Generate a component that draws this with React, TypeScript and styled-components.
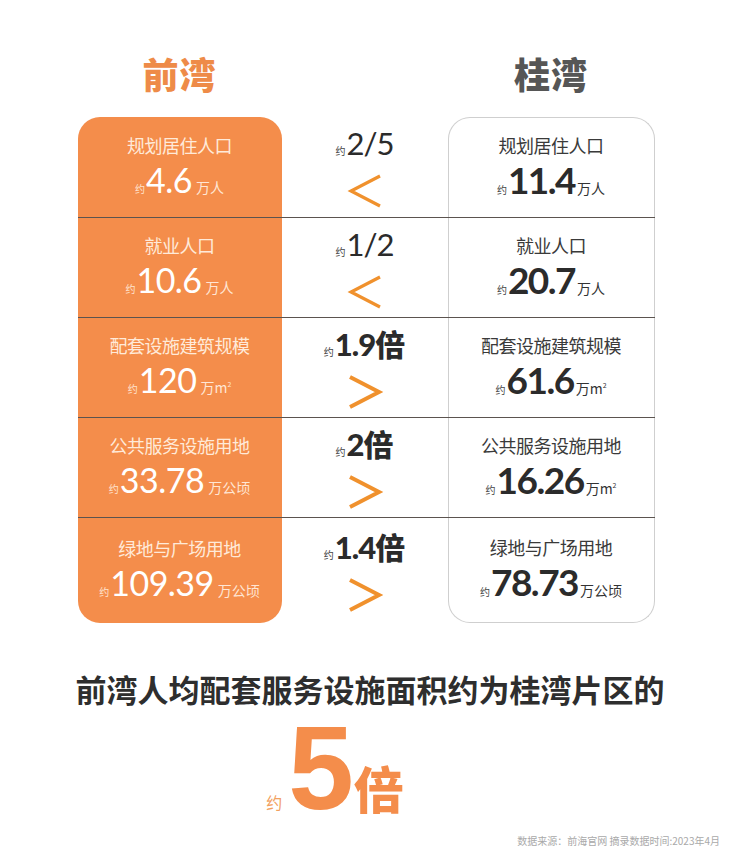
import React from "react";
import styled, { createGlobalStyle } from "styled-components";

const GlobalStyle = createGlobalStyle`
  html, body {
    margin: 0;
    padding: 0;
    background: #fff;
  }
  body {
    font-family: "Noto Sans CJK SC", "Noto Sans", sans-serif;
    color: #333;
  }
`;

const ORANGE = "#F48D4B";
const NUM_FONT = `"Lato", "Noto Sans CJK SC", sans-serif`;

const Page = styled.div`
  width: 740px;
  height: 862px;
  display: flex;
  flex-direction: column;
  align-items: center;
  box-sizing: border-box;
  padding-top: 50px;
`;

const Heads = styled.div`
  display: grid;
  grid-template-columns: 204px 166px 207px;
  width: 577px;
  height: 67px;
  margin-right: 8px;
`;

const Head = styled.div<{ $accent?: boolean }>`
  font-size: 36px;
  font-weight: 900;
  letter-spacing: 1px;
  text-align: center;
  line-height: 46px;
  color: ${(p) => (p.$accent ? "#EE8B48" : "#565656")};
`;

const Table = styled.div`
  width: 577px;
  margin-right: 8px;
  display: flex;
  flex-direction: column;
`;

const Row = styled.div<{ $first?: boolean; $tall?: boolean }>`
  display: grid;
  grid-template-columns: 204px 166px 207px;
  height: ${(p) => (p.$tall ? 106 : 100)}px;
  box-sizing: border-box;
  border-top: ${(p) => (p.$first ? "none" : "1.5px solid rgba(45, 35, 30, 0.78)")};
`;

const Cell = styled.div`
  display: flex;
  flex-direction: column;
  align-items: center;
  justify-content: center;
  box-sizing: border-box;
  padding-top: 6px;
`;

const OrangeCell = styled(Cell)<{ $first?: boolean; $last?: boolean }>`
  background: ${ORANGE};
  border-radius: ${(p) => (p.$first ? "22px 22px 0 0" : p.$last ? "0 0 22px 22px" : "0")};
  gap: 4px;
`;

const GrayCell = styled(Cell)<{ $first?: boolean; $last?: boolean }>`
  border-left: 1.5px solid #cfcfcf;
  border-right: 1.5px solid #cfcfcf;
  border-top: ${(p) => (p.$first ? "1.5px solid #cfcfcf" : "none")};
  border-bottom: ${(p) => (p.$last ? "1.5px solid #cfcfcf" : "none")};
  border-radius: ${(p) => (p.$first ? "22px 22px 0 0" : p.$last ? "0 0 22px 22px" : "0")};
  gap: 4px;
`;

const MidCell = styled(Cell)`
  gap: 6px;
  padding-top: 2px;
`;

const Label = styled.div<{ $light?: boolean }>`
  font-size: 18px;
  line-height: 24px;
  color: ${(p) => (p.$light ? "#FFEAD9" : "#3a3a3a")};
  letter-spacing: -0.5px;
`;

const Value = styled.div<{ $light?: boolean }>`
  display: flex;
  align-items: baseline;
  color: ${(p) => (p.$light ? "#fff" : "#2b2b2b")};
  line-height: 38px;
`;

const Approx = styled.span<{ $light?: boolean }>`
  font-size: 10px;
  margin-right: 1px;
  color: ${(p) => (p.$light ? "#FFE3CF" : "#444")};
`;

const Num = styled.span<{ $light?: boolean }>`
  font-family: ${NUM_FONT};
  font-size: ${(p) => (p.$light ? 34 : 37)}px;
  font-weight: ${(p) => (p.$light ? 400 : 700)};
  letter-spacing: ${(p) => (p.$light ? "-0.5px" : "-1.5px")};
`;

const Unit = styled.span<{ $light?: boolean }>`
  font-size: 14px;
  margin-left: ${(p) => (p.$light ? "4px" : "2px")};
  color: ${(p) => (p.$light ? "#FFE6D4" : "#333")};
  sup {
    font-size: 7px;
  }
`;

const Ratio = styled.div`
  display: flex;
  align-items: baseline;
  color: #2b2b2b;
  line-height: 32px;
`;

const RatioNum = styled.span<{ $bold?: boolean }>`
  font-family: ${NUM_FONT};
  font-size: 31px;
  font-weight: ${(p) => (p.$bold ? 900 : 400)};
  letter-spacing: -1px;
`;

const RatioUnit = styled.span`
  font-size: 30px;
  font-weight: 900;
`;

const Summary = styled.div`
  margin-top: 46px;
  font-size: 31px;
  font-weight: 700;
  color: #2e2e2e;
  line-height: 40px;
`;

const Big = styled.div`
  margin-top: 4px;
  margin-left: -70px;
  display: flex;
  align-items: baseline;
  color: ${ORANGE};
  line-height: 110px;
`;

const BigApprox = styled.span`
  font-size: 16px;
  color: #F2A060;
  margin-right: 6px;
`;

const BigNum = styled.span`
  font-family: "Liberation Sans", ${NUM_FONT};
  font-size: 118px;
  font-weight: 700;
  letter-spacing: -4px;
`;

const BigUnit = styled.span`
  font-size: 50px;
  font-weight: 900;
  margin-left: 4px;
`;

const Footer = styled.div`
  align-self: flex-end;
  margin-top: -24px;
  margin-right: 20px;
  font-size: 10px;
  color: #a9a9a9;
`;

const Arrow = ({ dir }: { dir: "lt" | "gt" }) => (
  <svg width="38" height="36" viewBox="0 0 38 36">
    <polyline
      points={dir === "lt" ? "34,3 5,18 34,33" : "4,3 33,18 4,33"}
      fill="none"
      stroke="#F0912D"
      strokeWidth={dir === "lt" ? 3.2 : 4}
    />
  </svg>
);

type Item = {
  label: string;
  left: string;
  leftUnit: React.ReactNode;
  ratio: string;
  ratioUnit?: string;
  dir: "lt" | "gt";
  right: string;
  rightUnit: React.ReactNode;
};

const sqm = (
  <>
    万m<sup>2</sup>
  </>
);

const items: Item[] = [
  { label: "规划居住人口", left: "4.6", leftUnit: "万人", ratio: "2/5", dir: "lt", right: "11.4", rightUnit: "万人" },
  { label: "就业人口", left: "10.6", leftUnit: "万人", ratio: "1/2", dir: "lt", right: "20.7", rightUnit: "万人" },
  { label: "配套设施建筑规模", left: "120", leftUnit: sqm, ratio: "1.9", ratioUnit: "倍", dir: "gt", right: "61.6", rightUnit: sqm },
  { label: "公共服务设施用地", left: "33.78", leftUnit: "万公顷", ratio: "2", ratioUnit: "倍", dir: "gt", right: "16.26", rightUnit: sqm },
  { label: "绿地与广场用地", left: "109.39", leftUnit: "万公顷", ratio: "1.4", ratioUnit: "倍", dir: "gt", right: "78.73", rightUnit: "万公顷" },
];

export default function App() {
  return (
    <>
      <GlobalStyle />
      <Page>
        <Heads>
          <Head $accent>前湾</Head>
          <div />
          <Head>桂湾</Head>
        </Heads>
        <Table>
          {items.map((it, i) => {
            const first = i === 0;
            const last = i === items.length - 1;
            return (
              <Row key={it.label} $first={first} $tall={last}>
                <OrangeCell $first={first} $last={last}>
                  <Label $light>{it.label}</Label>
                  <Value $light>
                    <Approx $light>约</Approx>
                    <Num $light>{it.left}</Num>
                    <Unit $light>{it.leftUnit}</Unit>
                  </Value>
                </OrangeCell>
                <MidCell>
                  <Ratio>
                    <Approx>约</Approx>
                    <RatioNum $bold={!!it.ratioUnit}>{it.ratio}</RatioNum>
                    {it.ratioUnit && <RatioUnit>{it.ratioUnit}</RatioUnit>}
                  </Ratio>
                  <Arrow dir={it.dir} />
                </MidCell>
                <GrayCell $first={first} $last={last}>
                  <Label>{it.label}</Label>
                  <Value>
                    <Approx>约</Approx>
                    <Num>{it.right}</Num>
                    <Unit>{it.rightUnit}</Unit>
                  </Value>
                </GrayCell>
              </Row>
            );
          })}
        </Table>
        <Summary>前湾人均配套服务设施面积约为桂湾片区的</Summary>
        <Big>
          <BigApprox>约</BigApprox>
          <BigNum>5</BigNum>
          <BigUnit>倍</BigUnit>
        </Big>
        <Footer>数据来源：前海官网 摘录数据时间:2023年4月</Footer>
      </Page>
    </>
  );
}
